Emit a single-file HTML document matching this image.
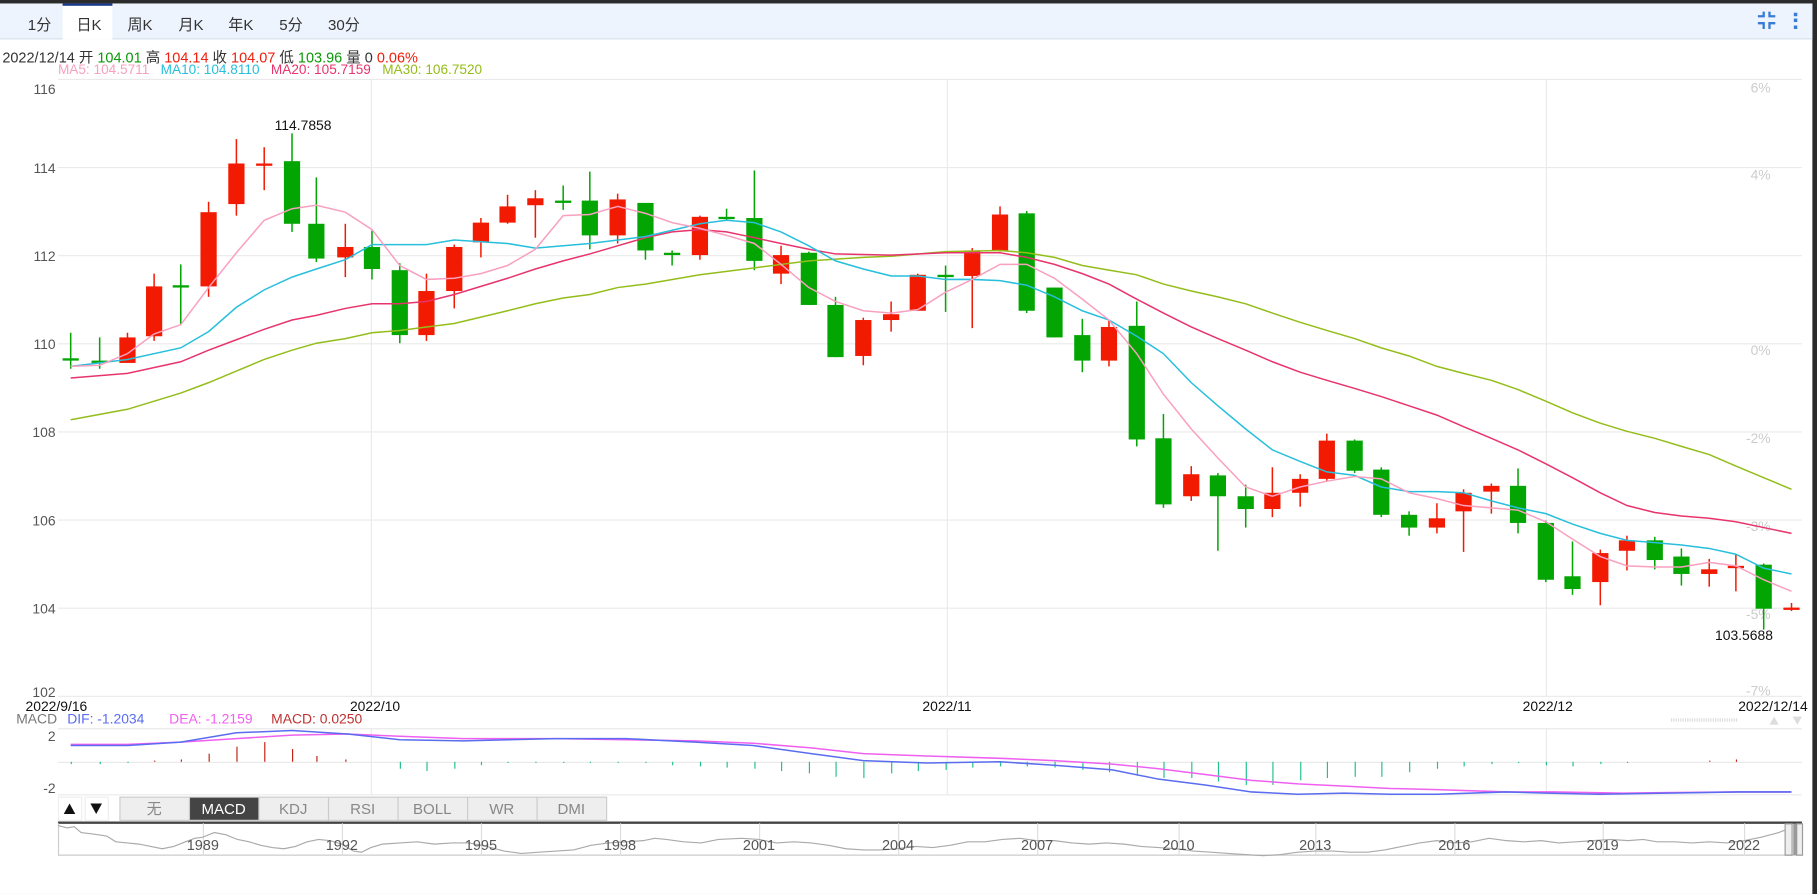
<!DOCTYPE html>
<html><head><meta charset="utf-8">
<style>
html,body{margin:0;padding:0;background:#2b2b2b;width:1817px;height:894px;overflow:hidden}
#w{position:absolute;left:0;top:0;width:1568px;height:771px;transform:scale(1.1588,1.1595);transform-origin:0 0;background:#2b2b2b;font-family:"Liberation Sans","Noto Sans CJK SC",sans-serif}
#p{position:absolute;left:0;top:3px;width:1564px;height:768px;background:#fff}
.tb{position:absolute;left:0;top:0;width:1564px;height:30px;background:#edf4fe;border-bottom:1px solid #d6e0ec}
.tab{position:absolute;top:8px;font-size:13px;color:#333}
.act{position:absolute;left:54px;top:0;width:43px;height:31px;background:#fff;border-top:2px solid #1a3a8a;box-sizing:border-box}
.t{position:absolute;font-size:12px;white-space:nowrap}
</style></head><body><div id="w"><div id="p">
<div class="tb"></div>
<div class="act"></div>
<div class="tab" style="left:24px">1分</div>
<div class="tab" style="left:66px">日K</div>
<div class="tab" style="left:110px">周K</div>
<div class="tab" style="left:154px">月K</div>
<div class="tab" style="left:197px">年K</div>
<div class="tab" style="left:241px">5分</div>
<div class="tab" style="left:283px">30分</div>
<svg style="position:absolute;left:1514px;top:5px" width="50" height="20"><g stroke="#3a7bd5" stroke-width="2" fill="none"><path d="M3 6h5V2M13 2v4h5M3 12h5v5M13 17v-5h5"/></g><g fill="#3a7bd5"><rect x="34" y="3" width="3" height="3"/><rect x="34" y="8" width="3" height="3"/><rect x="34" y="14" width="3" height="3"/></g></svg>
<div class="t" style="left:2px;top:36px;color:#333;font-size:12.5px">2022/12/14 开 <span style="color:#0a9a0a">104.01</span> 高 <span style="color:#f02010">104.14</span> 收 <span style="color:#f02010">104.07</span> 低 <span style="color:#0a9a0a">103.96</span> 量 0 <span style="color:#f02010">0.06%</span></div>
<div class="t" style="left:50px;top:51px;font-size:11.75px"><span style="color:#f9a0c0">MA5: 104.5711</span>&nbsp;&nbsp;&nbsp;<span style="color:#27bfdc">MA10: 104.8110</span>&nbsp;&nbsp;&nbsp;<span style="color:#e8346c">MA20: 105.7159</span>&nbsp;&nbsp;&nbsp;<span style="color:#94bd1a">MA30: 106.7520</span></div>
</div>
<svg style="position:absolute;left:0;top:0" width="1568" height="771" font-family="Liberation Sans, sans-serif">
<g stroke="#eaeaea" stroke-width="1">
<line x1="50" y1="68.5" x2="1555" y2="68.5"/>
<line x1="50" y1="144.5" x2="1555" y2="144.5"/><line x1="50" y1="220.5" x2="1555" y2="220.5"/><line x1="50" y1="296.5" x2="1555" y2="296.5"/><line x1="50" y1="372.5" x2="1555" y2="372.5"/><line x1="50" y1="448.5" x2="1555" y2="448.5"/><line x1="50" y1="524.5" x2="1555" y2="524.5"/><line x1="50" y1="600.5" x2="1555" y2="600.5"/>
<line x1="320.5" y1="68" x2="320.5" y2="600"/><line x1="817.5" y1="68" x2="817.5" y2="600"/><line x1="1334.5" y1="68" x2="1334.5" y2="600"/>
<line x1="50" y1="628.5" x2="1555" y2="628.5"/><line x1="50" y1="657.5" x2="1555" y2="657.5"/><line x1="50" y1="685.5" x2="1555" y2="685.5"/>
<line x1="320.5" y1="628" x2="320.5" y2="685"/><line x1="817.5" y1="628" x2="817.5" y2="685"/><line x1="1334.5" y1="628" x2="1334.5" y2="685"/>
</g>
<g font-size="12" fill="#555" text-anchor="end">
<text x="48" y="81">116</text><text x="48" y="149">114</text><text x="48" y="225">112</text><text x="48" y="301">110</text><text x="48" y="377">108</text><text x="48" y="453">106</text><text x="48" y="529">104</text><text x="48" y="601">102</text>
<text x="48" y="639">2</text><text x="48" y="684">-2</text>
</g>
<g font-size="12" fill="#ccc" text-anchor="end">
<text x="1528" y="80">6%</text><text x="1528" y="155">4%</text><text x="1528" y="306">0%</text><text x="1528" y="382">-2%</text><text x="1528" y="458">-3%</text><text x="1528" y="534">-5%</text><text x="1528" y="600">-7%</text>
</g>
<g font-size="12" fill="#111">
<text x="22" y="613">2022/9/16</text><text x="302" y="613">2022/10</text><text x="796" y="613">2022/11</text><text x="1314" y="613">2022/12</text><text x="1500" y="613">2022/12/14</text>
<text x="237" y="112">114.7858</text><text x="1480" y="552">103.5688</text>
</g>
<line x1="1442" y1="621" x2="1500" y2="621" stroke="#ddd" stroke-dasharray="1,1" stroke-width="3"/>
<path d="M1527 625l4-7 4 7zM1547 618l4 7 4-7z" fill="#ddd"/>
<g font-size="12"><text x="14" y="624" fill="#777">MACD</text><text x="58" y="624" fill="#5a6cf0">DIF: -1.2034</text><text x="146" y="624" fill="#f060f0">DEA: -1.2159</text><text x="234" y="624" fill="#c03030">MACD: 0.0250</text></g>
<g id="candles"></g>
<polyline fill="none" stroke="#94bd1a" stroke-width="1.3" points="61,362 110,353 156,339 180,330 204,320 228,310 252,302 273,296 298,292 321,287 345,285 368,282 392,279 438,268 462,262 486,257 509,254 533,248 557,245 604,237 651,231 698,225 745,222 769,221 816,217 863,216 886,218 910,222 934,229 957,233 981,237 1004,245 1028,251 1051,256 1075,262 1098,270 1122,278 1145,285 1169,292 1192,300 1216,307 1240,316 1263,322 1287,328 1310,336 1334,346 1357,356 1381,365 1404,372 1428,378 1451,385 1475,392 1498,402 1522,412 1546,422"/>
<polyline fill="none" stroke="#e8346c" stroke-width="1.3" points="61,326 110,322 156,312 180,302 204,293 228,284 252,276 273,272 298,266 321,262 345,262 368,260 392,254 415,247 438,240 462,232 486,225 509,219 533,212 557,205 580,200 604,198 627,200 651,205 674,210 698,215 721,219 769,220 816,218 863,218 886,222 910,228 934,236 957,245 981,258 1004,270 1028,282 1051,292 1075,302 1098,312 1122,321 1145,328 1169,335 1192,342 1216,350 1240,358 1263,368 1287,378 1310,388 1334,400 1357,412 1381,425 1404,436 1428,442 1451,445 1475,447 1498,450 1522,455 1546,460"/>
<polyline fill="none" stroke="#27bfdc" stroke-width="1.3" points="61,316 110,310 156,300 180,286 204,265 228,250 252,239 273,232 298,224 321,211 345,211 368,211 392,207 438,210 462,214 509,210 557,204 604,193 627,190 651,192 674,200 698,212 721,225 745,232 769,238 792,238 816,241 839,241 863,242 886,246 910,256 934,268 957,276 981,290 1004,305 1028,330 1051,350 1075,370 1098,388 1122,398 1145,407 1169,410 1192,420 1216,424 1240,424 1263,425 1287,432 1310,438 1334,443 1357,452 1381,460 1404,466 1428,468 1451,470 1475,473 1498,478 1522,490 1546,495"/>
<polyline fill="none" stroke="#f9a0c0" stroke-width="1.3" points="61,316 86,315 110,305 133,288 156,280 180,248 204,218 228,190 252,180 273,177 298,183 321,198 345,229 368,241 392,240 415,236 438,229 462,215 486,186 509,185 533,178 557,184 580,192 604,197 627,203 651,210 674,228 698,248 721,260 745,268 769,270 792,267 816,252 839,241 863,228 886,228 910,240 934,258 957,276 981,305 1004,340 1028,370 1051,395 1075,420 1098,428 1122,420 1145,415 1169,411 1192,413 1216,425 1240,430 1263,436 1287,438 1310,440 1334,450 1357,465 1381,480 1404,488 1428,489 1451,489 1475,485 1498,488 1522,500 1546,510"/>
<g id="hist"></g>
<polyline fill="none" stroke="#f060f0" stroke-width="1.3" points="61,642 110,642 156,640 204,637 252,634 300,633 345,635 400,637 480,637 540,638 600,639 650,641 700,645 745,650 800,652 863,654 910,656 960,659 1000,663 1040,668 1080,673 1120,676 1160,678 1200,680 1240,681 1300,683 1340,683 1400,684 1500,683 1546,683"/>
<polyline fill="none" stroke="#5a6cf0" stroke-width="1.3" points="61,643 110,643 156,640 204,632 252,630 300,633 345,638 400,639 480,637 540,637 600,640 650,643 700,650 745,656 800,658 863,657 910,660 960,664 1000,672 1040,677 1080,683 1120,685 1160,684 1200,685 1240,685 1300,683 1334,684 1380,685 1440,684 1500,683 1546,683"/>
<rect x="50.5" y="687.5" width="20" height="20" fill="#fff" stroke="#eee"/><rect x="73.5" y="687.5" width="20" height="20" fill="#fff" stroke="#eee"/>
<path d="M55 702l5-9 5 9zM78 693l5 9 5-9z" fill="#111"/>
<g font-size="13" text-anchor="middle">
<rect x="103.5" y="687.5" width="60" height="20" fill="#eee" stroke="#ccc"/><text x="133" y="702" fill="#888">无</text>
<rect x="163.5" y="687.5" width="60" height="20" fill="#444" stroke="#ccc"/><text x="193" y="702" fill="#fff">MACD</text>
<rect x="223.5" y="687.5" width="60" height="20" fill="#eee" stroke="#ccc"/><text x="253" y="702" fill="#888">KDJ</text>
<rect x="283.5" y="687.5" width="60" height="20" fill="#eee" stroke="#ccc"/><text x="313" y="702" fill="#888">RSI</text>
<rect x="343.5" y="687.5" width="60" height="20" fill="#eee" stroke="#ccc"/><text x="373" y="702" fill="#888">BOLL</text>
<rect x="403.5" y="687.5" width="60" height="20" fill="#eee" stroke="#ccc"/><text x="433" y="702" fill="#888">WR</text>
<rect x="463.5" y="687.5" width="60" height="20" fill="#eee" stroke="#ccc"/><text x="493" y="702" fill="#888">DMI</text>
</g>
<line x1="50" y1="709.5" x2="1555" y2="709.5" stroke="#444" stroke-width="2"/>
<line x1="50" y1="737.5" x2="1555" y2="737.5" stroke="#ccc"/><line x1="50.5" y1="710" x2="50.5" y2="738" stroke="#ccc"/>
<g stroke="#ddd"><line x1="175.5" y1="710" x2="175.5" y2="738"/><line x1="295.5" y1="710" x2="295.5" y2="738"/><line x1="415.5" y1="710" x2="415.5" y2="738"/><line x1="535.5" y1="710" x2="535.5" y2="738"/><line x1="655.5" y1="710" x2="655.5" y2="738"/><line x1="775.5" y1="710" x2="775.5" y2="738"/><line x1="895.5" y1="710" x2="895.5" y2="738"/><line x1="1017.5" y1="710" x2="1017.5" y2="738"/><line x1="1135.5" y1="710" x2="1135.5" y2="738"/><line x1="1255.5" y1="710" x2="1255.5" y2="738"/><line x1="1383.5" y1="710" x2="1383.5" y2="738"/><line x1="1505.5" y1="710" x2="1505.5" y2="738"/></g>
<polyline fill="none" stroke="#aaa" stroke-width="1" points="50,712 58,714 64,713 70,718 78,719 85,720 92,721 100,726 110,727 120,728 130,730 140,732 150,730 160,726 168,723 175,722 185,718 195,720 205,724 215,726 225,729 235,731 245,732 255,730 265,726 275,724 285,725 295,728 305,734 312,735 320,731 330,728 345,727 360,726 375,728 390,727 405,727 420,730 435,734 450,736 465,735 480,734 495,733 510,729 525,727 540,726 555,725 565,723 575,724 590,726 605,727 620,724 640,723 655,724 670,727 685,726 700,727 715,729 730,732 745,733 760,733 775,732 790,730 805,731 820,729 835,726 850,726 865,724 880,723 895,725 910,725 925,727 940,728 955,727 970,728 985,730 1000,731 1015,732 1030,734 1045,735 1060,736 1075,737 1090,738 1105,737 1120,735 1135,734 1150,734 1165,735 1180,735 1195,733 1210,730 1225,727 1240,725 1255,727 1270,726 1285,723 1300,725 1315,726 1330,725 1345,727 1360,726 1375,725 1390,724 1405,725 1418,724 1430,726 1445,726 1460,727 1475,726 1490,727 1505,725 1520,722 1535,718 1540,716"/>
<g font-size="12.5" fill="#555" text-anchor="middle"><text x="175" y="733">1989</text><text x="295" y="733">1992</text><text x="415" y="733">1995</text><text x="535" y="733">1998</text><text x="655" y="733">2001</text><text x="775" y="733">2004</text><text x="895" y="733">2007</text><text x="1017" y="733">2010</text><text x="1135" y="733">2013</text><text x="1255" y="733">2016</text><text x="1383" y="733">2019</text><text x="1505" y="733">2022</text></g>
<rect x="1540.5" y="710.5" width="6" height="27" fill="#eee" stroke="#999"/><rect x="1547.5" y="710.5" width="5" height="27" fill="#999"/><rect x="1550.5" y="710.5" width="5" height="27" fill="#eee" stroke="#999"/>
</svg>
<script>
var C=[[61,309,309,287,318,0],[86,311,311,291,318,0],[110,291,313,287,313,1],[133,247,290,236,294,1],[156,246,246,228,280,0],[180,183,247,174,256,1],[204,141,176,120,186,1],[228,141,141,127,164,1],[252,139,193,115,200,0],[273,193,223,153,226,0],[298,213,222,193,239,1],[321,213,232,199,241,0],[345,233,289,227,296,0],[368,251,289,236,294,1],[392,213,251,211,266,1],[415,192,209,188,222,1],[438,178,192,168,193,1],[462,171,177,164,205,1],[486,173,173,160,181,0],[509,173,203,148,215,0],[533,172,203,167,210,1],[557,175,216,175,224,0],[580,218,218,216,229,0],[604,187,220,186,224,1],[627,187,187,180,190,0],[651,188,225,147,233,0],[674,220,236,212,245,1],[698,218,263,217,263,0],[721,263,308,256,308,0],[745,276,307,274,315,1],[769,271,276,260,286,1],[792,237,268,236,268,1],[816,237,237,229,269,0],[839,216,238,214,283,1],[863,185,216,178,217,1],[886,184,268,182,270,0],[910,248,291,248,291,0],[934,289,311,275,321,0],[957,282,311,276,316,1],[981,281,379,260,385,0],[1004,378,435,357,438,0],[1028,409,428,402,432,1],[1051,410,428,408,475,0],[1075,428,439,418,455,0],[1098,425,439,403,446,1],[1122,413,425,409,437,1],[1145,380,413,374,415,1],[1169,380,406,379,408,0],[1192,405,444,403,446,0],[1216,444,455,441,462,0],[1240,447,455,434,460,1],[1263,425,441,422,476,1],[1287,419,424,417,443,1],[1310,419,451,404,460,0],[1334,451,500,449,502,0],[1357,497,508,467,513,0],[1381,477,502,474,522,1],[1404,466,475,462,492,1],[1428,466,483,463,491,0],[1451,480,495,473,505,0],[1475,491,495,482,506,1],[1498,488,488,478,510,1],[1522,487,525,486,543,0],[1546,524,524,520,527,1]];
var s='';
C.forEach(function(c){var col=c[5]?'#f21a00':'#02a502';var t=Math.min(c[1],c[2]),h=Math.max(2,Math.abs(c[2]-c[1]));
s+='<line x1="'+c[0]+'" y1="'+c[3]+'" x2="'+c[0]+'" y2="'+c[4]+'" stroke="'+col+'" stroke-width="1.3"/>';
s+='<rect x="'+(c[0]-7)+'" y="'+t+'" width="14" height="'+h+'" fill="'+col+'"/>';});
document.getElementById('candles').innerHTML=s;
var H=[[61,2],[86,2],[110,1],[133,-1],[156,-2],[180,-7],[204,-13],[228,-17],[252,-11],[273,-5],[298,-2],[345,6],[368,8],[392,6],[415,3],[438,1],[462,1],[486,1],[509,1],[533,1],[557,1],[580,3],[604,4],[627,5],[651,6],[674,8],[698,10],[721,13],[745,14],[769,10],[792,8],[816,7],[839,5],[863,4],[886,4],[910,5],[934,7],[957,9],[981,12],[1004,14],[1028,14],[1051,17],[1075,20],[1098,20],[1122,16],[1145,14],[1169,13],[1192,13],[1216,9],[1240,6],[1263,4],[1287,2],[1310,1],[1334,3],[1357,4],[1381,2],[1404,1],[1475,-1],[1498,-2]];
var h='';H.forEach(function(b){var col=b[1]<0?'#c02010':'#1ec08a';var y=b[1]<0?657+b[1]:657;h+='<rect x="'+b[0]+'" y="'+y+'" width="1" height="'+Math.abs(b[1])+'" fill="'+col+'"/>';});
document.getElementById('hist').innerHTML=h;
</script>
</div></body></html>
